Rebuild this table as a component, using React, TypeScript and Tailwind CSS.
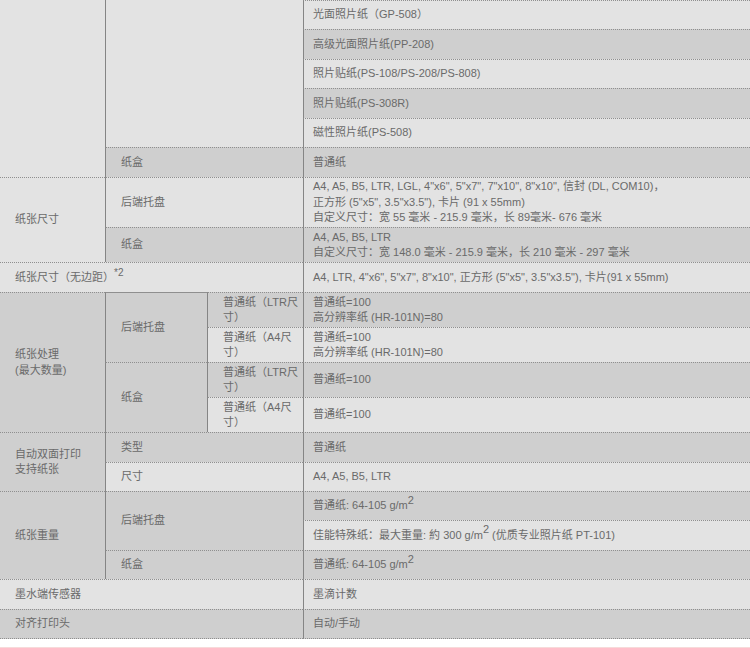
import React from "react";

const L = "bg-[#e3e3e3]";
const D = "bg-[#cfcfcf]";

type CellProps = {
  pos: string;
  bg: string;
  top?: boolean;
  left?: boolean;
  pad?: string;
  extra?: string;
  children?: React.ReactNode;
};

function Cell({ pos, bg, top = true, left = true, pad = "pl-[15px]", extra = "", children }: CellProps) {
  const t = top ? "border-t border-t-[#8f8f8f] [border-top-style:dotted]" : "";
  const l = left ? "border-l border-l-[#858585]" : "";
  return (
    <div className={`${pos} ${bg} ${t} ${l} ${pad} ${extra} flex items-center pr-[4px]`}>
      <div>{children}</div>
    </div>
  );
}

const Sup = ({ children }: { children: React.ReactNode }) => (
  <sup className="text-[11px]">{children}</sup>
);

export default function App() {
  return (
    <div
      className="w-[750px] h-[648px] bg-white text-[11px] leading-[15.5px] text-[#6a6a6a]"
      style={{ fontFamily: '"Liberation Sans", Arial, "Noto Sans CJK SC", sans-serif' }}
    >
      <div className="grid grid-cols-[105px_102px_96px_1fr] grid-rows-[29px_30px_29px_30px_29px_30px_50px_35px_30px_35px_35px_35px_35px_30px_29px_29px_30px_29px_30px_30px]">
        {/* Section A */}
        <Cell pos="col-start-1 row-start-1 row-span-6" bg={L} top={false} left={false} />
        <Cell pos="col-start-2 col-span-2 row-start-1 row-span-5" bg={L} top={false} />
        <Cell pos="col-start-4 row-start-1" bg={L} pad="pl-[9px]">光面照片纸（GP-508）</Cell>
        <Cell pos="col-start-4 row-start-2" bg={D} pad="pl-[9px]">高级光面照片纸(PP-208)</Cell>
        <Cell pos="col-start-4 row-start-3" bg={L} pad="pl-[9px]">照片贴纸(PS-108/PS-208/PS-808)</Cell>
        <Cell pos="col-start-4 row-start-4" bg={D} pad="pl-[9px]">照片贴纸(PS-308R)</Cell>
        <Cell pos="col-start-4 row-start-5" bg={L} pad="pl-[9px]">磁性照片纸(PS-508)</Cell>
        <Cell pos="col-start-2 col-span-2 row-start-6" bg={D}>纸盒</Cell>
        <Cell pos="col-start-4 row-start-6" bg={D} pad="pl-[9px]">普通纸</Cell>

        {/* Section B: 纸张尺寸 */}
        <Cell pos="col-start-1 row-start-7 row-span-2" bg={L} left={false}>纸张尺寸</Cell>
        <Cell pos="col-start-2 col-span-2 row-start-7" bg={L}>后端托盘</Cell>
        <Cell pos="col-start-4 row-start-7" bg={L} pad="pl-[9px]">
          A4, A5, B5, LTR, LGL, 4"x6", 5"x7", 7"x10", 8"x10", 信封 (DL, COM10)，
          <br />
          正方形 (5"x5", 3.5"x3.5"), 卡片 (91 x 55mm)
          <br />
          自定义尺寸：宽 55 毫米 - 215.9 毫米，长 89毫米- 676 毫米
        </Cell>
        <Cell pos="col-start-2 col-span-2 row-start-8" bg={D}>纸盒</Cell>
        <Cell pos="col-start-4 row-start-8" bg={D} pad="pl-[9px]">
          A4, A5, B5, LTR
          <br />
          自定义尺寸：宽 148.0 毫米 - 215.9 毫米，长 210 毫米 - 297 毫米
        </Cell>

        {/* Row 9 */}
        <Cell pos="col-start-1 col-span-3 row-start-9" bg={L} left={false}>
          纸张尺寸（无边距）<sup className="text-[10px]">*2</sup>
        </Cell>
        <Cell pos="col-start-4 row-start-9" bg={L} pad="pl-[9px]">
          A4, LTR, 4"x6", 5"x7", 8"x10", 正方形 (5"x5", 3.5"x3.5"), 卡片(91 x 55mm)
        </Cell>

        {/* Section C: 纸张处理 */}
        <Cell pos="col-start-1 row-start-10 row-span-4" bg={D} left={false}>
          纸张处理
          <br />
          (最大数量)
        </Cell>
        <Cell pos="col-start-2 row-start-10 row-span-2" bg={D} extra="[border-top-style:solid]">后端托盘</Cell>
        <Cell pos="col-start-3 row-start-10" bg={D}>
          普通纸（LTR尺
          <br />
          寸）
        </Cell>
        <Cell pos="col-start-4 row-start-10" bg={D} pad="pl-[9px]">
          普通纸=100
          <br />
          高分辨率纸 (HR-101N)=80
        </Cell>
        <Cell pos="col-start-3 row-start-11" bg={L}>
          普通纸（A4尺
          <br />
          寸）
        </Cell>
        <Cell pos="col-start-4 row-start-11" bg={L} pad="pl-[9px]">
          普通纸=100
          <br />
          高分辨率纸 (HR-101N)=80
        </Cell>
        <Cell pos="col-start-2 row-start-12 row-span-2" bg={D}>纸盒</Cell>
        <Cell pos="col-start-3 row-start-12" bg={D}>
          普通纸（LTR尺
          <br />
          寸）
        </Cell>
        <Cell pos="col-start-4 row-start-12" bg={D} pad="pl-[9px]">普通纸=100</Cell>
        <Cell pos="col-start-3 row-start-13" bg={L}>
          普通纸（A4尺
          <br />
          寸）
        </Cell>
        <Cell pos="col-start-4 row-start-13" bg={L} pad="pl-[9px]">普通纸=100</Cell>

        {/* Section D: 自动双面打印 */}
        <Cell pos="col-start-1 row-start-14 row-span-2" bg={D} left={false}>
          自动双面打印
          <br />
          支持纸张
        </Cell>
        <Cell pos="col-start-2 col-span-2 row-start-14" bg={D}>类型</Cell>
        <Cell pos="col-start-4 row-start-14" bg={D} pad="pl-[9px]">普通纸</Cell>
        <Cell pos="col-start-2 col-span-2 row-start-15" bg={L}>尺寸</Cell>
        <Cell pos="col-start-4 row-start-15" bg={L} pad="pl-[9px]">A4, A5, B5, LTR</Cell>

        {/* Section E: 纸张重量 */}
        <Cell pos="col-start-1 row-start-16 row-span-3" bg={D} left={false}>纸张重量</Cell>
        <Cell pos="col-start-2 col-span-2 row-start-16 row-span-2" bg={D}>后端托盘</Cell>
        <Cell pos="col-start-4 row-start-16" bg={D} pad="pl-[9px]">
          普通纸: 64-105 g/m<Sup>2</Sup>
        </Cell>
        <Cell pos="col-start-4 row-start-17" bg={L} pad="pl-[9px]">
          佳能特殊纸：最大重量: 約 300 g/m<Sup>2</Sup> (优质专业照片纸 PT-101)
        </Cell>
        <Cell pos="col-start-2 col-span-2 row-start-18" bg={D}>纸盒</Cell>
        <Cell pos="col-start-4 row-start-18" bg={D} pad="pl-[9px]">
          普通纸: 64-105 g/m<Sup>2</Sup>
        </Cell>

        {/* Row 19, 20 */}
        <Cell pos="col-start-1 col-span-3 row-start-19" bg={L} left={false}>墨水端传感器</Cell>
        <Cell pos="col-start-4 row-start-19" bg={L} pad="pl-[9px]">墨滴计数</Cell>
        <Cell
          pos="col-start-1 col-span-3 row-start-20"
          bg={D}
          left={false}
          extra="border-b border-b-[#8f8f8f] [border-bottom-style:dotted]"
        >
          对齐打印头
        </Cell>
        <Cell
          pos="col-start-4 row-start-20"
          bg={D}
          pad="pl-[9px]"
          extra="border-b border-b-[#8f8f8f] [border-bottom-style:dotted]"
        >
          自动/手动
        </Cell>
      </div>
      <div className="h-[8px] bg-white" />
      <div className="h-px bg-[#f7dada]" />
    </div>
  );
}
